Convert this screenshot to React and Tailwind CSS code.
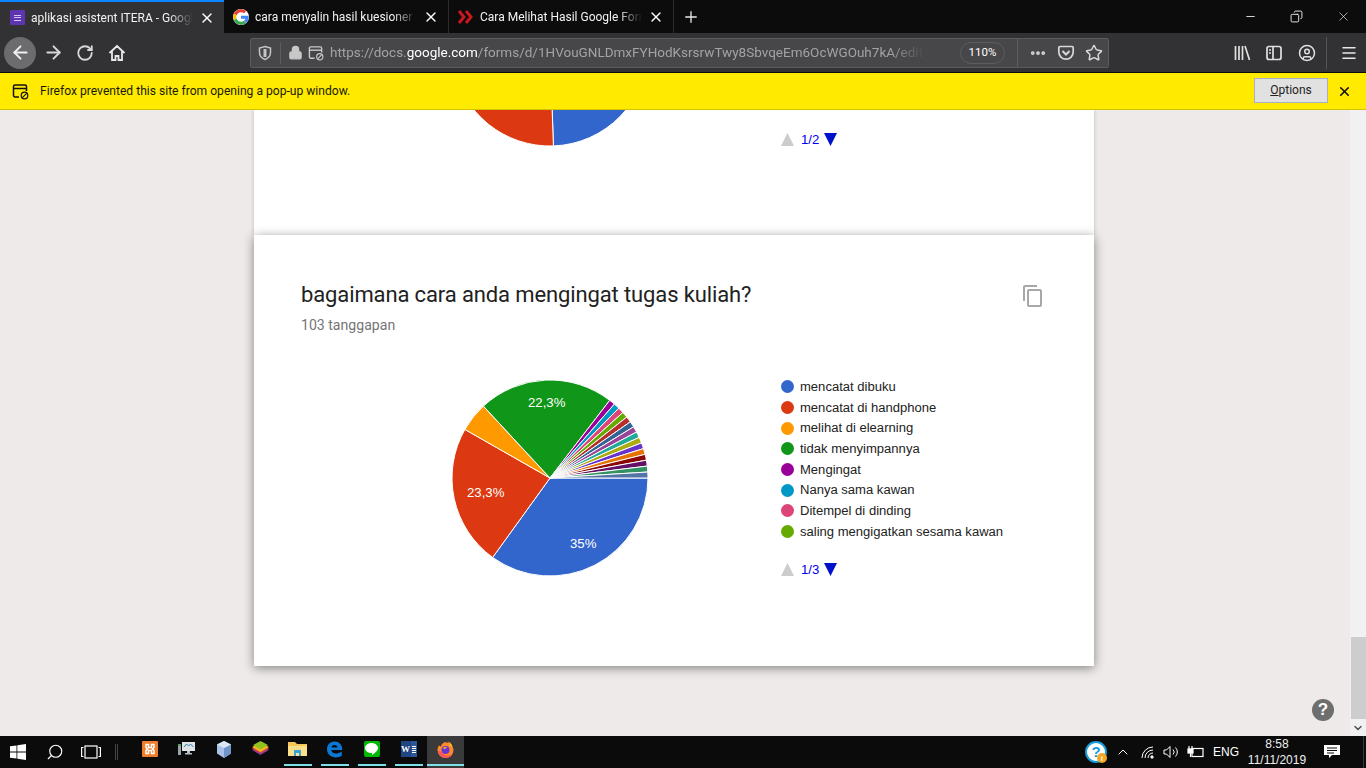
import { ArrowLeft, ArrowRight, RotateCw, Lock, Plus, X, Minus, Copy, ChevronDown, ChevronUp, Menu, Star, CircleUser, Search, MoreHorizontal } from 'lucide-react'

const COLORS = ['#3366cc', '#dc3912', '#ff9900', '#109618', '#990099', '#0099c6', '#dd4477', '#66aa00', '#b82e2e', '#316395', '#994499', '#22aa99', '#aaaa11', '#6633cc', '#e67300', '#8b0707', '#651067', '#329262', '#5574a6']
const COUNTS = [36, 24, 5, 23, 1, 1, 1, 1, 1, 1, 1, 1, 1, 1, 1, 1, 1, 1, 1]
const LEGEND = ['mencatat dibuku', 'mencatat di handphone', 'melihat di elearning', 'tidak menyimpannya', 'Mengingat', 'Nanya sama kawan', 'Ditempel di dinding', 'saling mengigatkan sesama kawan']

function slice(cx, cy, r, a, b) {
  const x1 = cx + r * Math.cos((a * Math.PI) / 180)
  const y1 = cy + r * Math.sin((a * Math.PI) / 180)
  const x2 = cx + r * Math.cos((b * Math.PI) / 180)
  const y2 = cy + r * Math.sin((b * Math.PI) / 180)
  return `M${cx} ${cy}L${x1} ${y1}A${r} ${r} 0 ${b - a > 180 ? 1 : 0} 1 ${x2} ${y2}Z`
}

function Pie() {
  let angle = 0
  const total = COUNTS.reduce((s, c) => s + c, 0)
  return (
    <svg width="200" height="200" viewBox="0 0 200 200" className="shrink-0">
      {COUNTS.map((c, i) => {
        const start = angle
        angle += (c / total) * 360
        return <path key={i} d={slice(100, 100, 98, start, angle)} fill={COLORS[i]} stroke="#fff" strokeWidth="1" />
      })}
      <g fill="#fff" fontSize="13.2" fontFamily="Liberation Sans, Arial, sans-serif">
        <text x="120" y="170">35%</text>
        <text x="17" y="119">23,3%</text>
        <text x="78" y="29">22,3%</text>
      </g>
    </svg>
  )
}

function TopPie() {
  return (
    <svg width="200" height="36" viewBox="0 62 200 36" className="shrink-0">
      <path d={slice(100, 0, 98, 0, 88)} fill="#3366cc" stroke="#fff" />
      <path d={slice(100, 0, 98, 88, 170)} fill="#dc3912" stroke="#fff" />
    </svg>
  )
}

function Pager({ label }) {
  return (
    <div className="flex items-center h-[14px]">
      <svg width="13" height="13" viewBox="0 0 13 13"><path d="M6.500 0L13 13H0Z" fill="#cccccc" /></svg>
      <span className="ml-[7px] w-[23px] pt-[2px] text-[13.2px] text-[#0000ee]">{label}</span>
      <svg width="13" height="13" viewBox="0 0 13 13"><path d="M0 0H13L6.500 13Z" fill="#0011cc" /></svg>
    </div>
  )
}

function Tab({ active, icon, title, width }) {
  return (
    <div className={`relative ${width} h-[33px] flex items-center pl-[9px] pr-[9px] ${active ? 'bg-[#323234] border-t-2 border-t-[#0a84ff]' : 'border-r border-[#2c2c2c]'}`}>
      <span className="w-[16px] h-[16px] shrink-0 flex items-center justify-center">{icon}</span>
      <span className="ml-[6px] flex-1 overflow-hidden whitespace-nowrap text-[12px] text-[#f2f2f2] [mask-image:linear-gradient(to_right,black_85%,transparent)]">{title}</span>
      <X size={16} strokeWidth={2} className="ml-[6px] shrink-0 text-white" />
    </div>
  )
}

function GoogleG() {
  return (
    <svg width="16" height="16" viewBox="0 0 48 48" className="bg-white rounded-full">
      <path fill="#EA4335" d="M24 9.500c3.500 0 6.700 1.300 9.100 3.500l6.800-6.800C35.800 2.400 30.300 0 24 0 14.600 0 6.500 5.400 2.600 13.200l7.900 6.200C12.400 13.600 17.700 9.500 24 9.500z" />
      <path fill="#4285F4" d="M47 24.500c0-1.600-.2-3.100-.4-4.500H24v9h13c-.6 3-2.300 5.500-4.800 7.200l7.700 6C44.400 37.900 47 31.800 47 24.500z" />
      <path fill="#FBBC05" d="M10.500 28.600c-.5-1.400-.8-3-.8-4.600s.3-3.200.8-4.600l-7.900-6.200C1 16.500 0 20.100 0 24s1 7.500 2.600 10.800l7.900-6.200z" />
      <path fill="#34A853" d="M24 48c6.500 0 11.900-2.100 15.900-5.800l-7.700-6c-2.200 1.500-4.900 2.300-8.200 2.300-6.300 0-11.600-4.200-13.500-9.900l-7.900 6.200C6.500 42.600 14.600 48 24 48z" />
    </svg>
  )
}

function BlockedPopup({ color, size = 17 }) {
  return (
    <svg width={size} height={size} viewBox="0 0 17 17" fill="none" stroke={color} strokeWidth="1.500">
      <path d="M7 14H3a1.500 1.500 0 0 1-1.500-1.500v-9A1.500 1.500 0 0 1 3 2h10a1.500 1.500 0 0 1 1.500 1.500V8" />
      <path d="M1.500 5.500h13" />
      <circle cx="12.500" cy="12.500" r="3.300" strokeWidth="1.200" />
      <path d="M10.300 14.700l4.400-4.400" strokeWidth="1.200" />
    </svg>
  )
}

function Toolbar() {
  return (
    <div className="h-[40px] bg-[#323234] flex items-center border-b border-[#0c0c0c]">
      <div className="w-[32px] h-[32px] ml-[4px] rounded-full bg-[#6c6c6e] flex items-center justify-center">
        <ArrowLeft size={21} strokeWidth={2.200} className="text-[#f0f0f0]" />
      </div>
      <ArrowRight size={21} strokeWidth={2.200} className="ml-[7px] text-[#d8d8d8]" />
      <RotateCw size={18} strokeWidth={2.400} className="ml-[12px] text-[#d8d8d8]" />
      <svg width="18" height="18" viewBox="0 0 18 18" fill="none" stroke="#e8e8e8" strokeWidth="1.800" className="ml-[14px]">
        <path d="M1.500 9L9 2l7.500 7M4 7.500V16h3.500v-4h3v4H14V7.500" />
      </svg>
      <div className="ml-[124px] w-[859px] h-[30px] shrink-0 bg-[#474749] border border-[#5c5c5e] rounded-[2px] flex items-center">
        <svg width="16" height="16" viewBox="0 0 16 16" fill="none" stroke="#c4c4c4" strokeWidth="1.500" className="ml-[6px]">
          <path d="M8 1.500l5.500 1.500v4.500c0 3.500-2.500 5.800-5.500 7-3-1.200-5.500-3.500-5.500-7V3z" />
          <path d="M8 4v8" strokeWidth="3" />
        </svg>
        <div className="ml-[7px] w-px h-[22px] bg-[#5c5c5e]" />
        <Lock size={15} fill="#c8c8c8" className="ml-[7px] text-[#c8c8c8]" />
        <span className="ml-[5px]"><BlockedPopup color="#c8c8c8" size={16} /></span>
        <div className="ml-[6px] w-[595px] overflow-hidden whitespace-nowrap text-[13.500px] text-[#a3a3a5] [mask-image:linear-gradient(to_right,black_94%,transparent)]">
          https://docs.<span className="text-white">google.com</span>/forms/d/1HVouGNLDmxFYHodKsrsrwTwy8SbvqeEm6OcWGOuh7kA/edit
        </div>
        <div className="ml-[35px] w-[45px] h-[22px] rounded-full border border-[#5c5c5e] flex items-center justify-center text-[11.500px] text-white">110%</div>
        <div className="ml-[12px] w-px h-[28px] bg-[#5c5c5e]" />
        <MoreHorizontal size={18} strokeWidth={3} className="ml-[11px] text-[#d8d8d8]" />
        <svg width="18" height="18" viewBox="0 0 18 18" fill="none" stroke="#d8d8d8" strokeWidth="1.700" className="ml-[10px]">
          <path d="M3 2.500h12a1.200 1.200 0 0 1 1.200 1.200V8A7.200 7.200 0 0 1 1.800 8V3.700A1.200 1.200 0 0 1 3 2.500z" />
          <path d="M5.500 7L9 10.500 12.500 7" strokeWidth="2" />
        </svg>
        <Star size={18} strokeWidth={2} className="ml-[10px] text-[#d8d8d8]" />
      </div>
      <svg width="18" height="18" viewBox="0 0 18 18" stroke="#e0e0e0" strokeWidth="1.700" className="ml-[124px] shrink-0">
        <path d="M2.500 2v14M6 2v14M9.500 2v14M12 2l4.500 14" />
      </svg>
      <svg width="18" height="18" viewBox="0 0 18 18" fill="none" stroke="#e0e0e0" strokeWidth="1.700" className="ml-[14px] shrink-0">
        <rect x="2" y="2.500" width="14" height="13" rx="2" />
        <path d="M8 2.500v13M4 6h2M4 9h2" />
      </svg>
      <CircleUser size={18} className="ml-[15px] shrink-0 text-[#e0e0e0]" />
      <div className="ml-[10px] w-px h-[32px] shrink-0 bg-[#555557]" />
      <Menu size={18} strokeWidth={2} className="ml-[13px] shrink-0 text-[#e8e8e8]" />
    </div>
  )
}

function TaskIcon({ open, active, children }) {
  return (
    <div className={`w-[37px] h-[32px] shrink-0 flex flex-col items-center ${active ? 'bg-[#3a3a3a]' : ''}`}>
      <div className="flex-1 flex items-center justify-center pb-[2px]">{children}</div>
      <span className={`h-[2px] mb-[2px] ${active ? 'w-full' : 'w-[28px]'} ${open ? 'bg-[#7fdfe8]' : ''}`} />
    </div>
  )
}

function Taskbar() {
  return (
    <div className="h-[32px] shrink-0 bg-[#0b0b0b] flex items-center text-white relative">
      <svg width="16" height="16" viewBox="0 0 16 16" fill="#fff" className="ml-[10px] shrink-0">
        <path d="M0 2.300l6.500-.9v6.200H0zM7.300 1.300L16 0v7.600H7.300zM0 8.400h6.500v6.200L0 13.700zM7.300 8.400H16V16l-8.700-1.300z" />
      </svg>
      <Search size={18} strokeWidth={1.500} className="ml-[20px] shrink-0 -scale-x-100" />
      <svg width="20" height="14" viewBox="0 0 20 14" fill="none" stroke="#fff" strokeWidth="1.200" className="ml-[17px] shrink-0">
        <rect x="4" y="1" width="12" height="12" />
        <path d="M2.500 2.500H.6v9h1.900M17.500 2.500h1.900v9h-1.900" />
      </svg>
      <div className="ml-[14px] mr-[13px] w-[3px] h-[16px] shrink-0 border-x border-[#444444]" />
      <TaskIcon>
        <div className="w-[16px] h-[16px] bg-[#ef7d2c] rounded-[1px] flex items-center justify-center">
          <svg width="12" height="12" viewBox="0 0 12 12" fill="none" stroke="#fff" strokeWidth="1.500"><path d="M2 1.500h2.500v3h3v-3H10v3L8.500 6 10 7.500v3H7.500v-3h-3v3H2v-3L3.500 6 2 4.500z" /></svg>
        </div>
      </TaskIcon>
      <TaskIcon>
        <svg width="17" height="16" viewBox="0 0 17 16">
          <rect x="4" y="1" width="13" height="9" fill="#dfe4e8" />
          <path d="M6 6l2.500-3 2 2 2-2 3 3" fill="none" stroke="#3a7bb0" />
          <rect x="0" y="5" width="3" height="9" fill="#9ca3a8" />
          <rect x="0" y="3" width="3" height="2" fill="#5aa05a" />
          <path d="M9 10h3v2h2v1.500H7V12h2z" fill="#b8bec2" />
        </svg>
      </TaskIcon>
      <TaskIcon>
        <svg width="16" height="17" viewBox="0 0 16 17">
          <path d="M8 0l7 3.500v9L8 17 1 12.500v-9z" fill="#a9c3e8" />
          <path d="M8 7l7-3.500v9L8 17z" fill="#7195c8" />
          <path d="M8 0l7 3.500L8 7 1 3.500z" fill="#dbe7f6" />
        </svg>
      </TaskIcon>
      <TaskIcon>
        <svg width="17" height="16" viewBox="0 0 17 16">
          <path d="M8.500 5L17 9l-8.500 5L0 9z" fill="#7b3fa0" />
          <path d="M8.500 3.500L17 7.500l-8.500 5L0 7.500z" fill="#e23b3b" />
          <path d="M8.500 2L17 6l-8.500 5L0 6z" fill="#f5b81f" />
          <path d="M8.500 0L16 4l-7.500 4.500L1 4z" fill="#8fc31f" />
        </svg>
      </TaskIcon>
      <TaskIcon open>
        <svg width="19" height="16" viewBox="0 0 19 16">
          <path d="M0 1h7l2 2h10v12H0z" fill="#f6c95a" />
          <rect x="0" y="5" width="19" height="10" fill="#fde08a" />
          <path d="M6 15V9h7v6h-2v-3H8v3z" fill="#3aa0d8" />
        </svg>
      </TaskIcon>
      <TaskIcon open>
        <svg width="17" height="17" viewBox="0 0 17 17">
          <path d="M1 8C1 3.500 4.300.5 8.500.5c4.500 0 7.800 3 7.800 8.500H5.300c.2 2.300 2 3.500 4.300 3.500 2 0 4-.6 6.200-2v4.300c-2 1-4 1.600-6.500 1.600C4 16 1 12.700 1 8zm4.400-1.500h6.200C11.400 4.800 10 4 8.500 4S5.700 4.800 5.400 6.500z" fill="#0a78d4" />
        </svg>
      </TaskIcon>
      <TaskIcon open>
        <div className="w-[16px] h-[16px] bg-[#00b900] rounded-[2px] flex items-center justify-center">
          <svg width="13" height="12" viewBox="0 0 13 12"><path d="M6.500 0C10 0 13 2.200 13 5c0 3-4 5.500-6 7 .3-1.500 0-2-1-2C2.800 10 0 7.800 0 5s3-5 6.500-5z" fill="#fff" /></svg>
        </div>
      </TaskIcon>
      <TaskIcon open>
        <div className="w-[16px] h-[16px] bg-[#2b579a] flex">
          <span className="w-[10px] h-full bg-[#1f4583] flex items-center justify-center text-[9px] leading-none font-bold font-['Liberation_Serif',serif]">W</span>
          <span className="flex-1 flex flex-col justify-center gap-px pl-px">
            <span className="h-px w-[4px] bg-white" />
            <span className="h-px w-[4px] bg-white" />
            <span className="h-px w-[4px] bg-white" />
            <span className="h-px w-[4px] bg-white" />
          </span>
        </div>
      </TaskIcon>
      <TaskIcon open active>
        <svg width="17" height="17" viewBox="0 0 17 17">
          <path d="M8.500 1c1 1 2 1 3.500 0 .5 1 .8 1.500 2 2.500.8 1 2.500 3 2.500 5.500a8 8 0 1 1-16 0c0-2 .8-3.500 1.500-4.500C3 5 3.300 5.500 3.800 5.500 4.500 3 6.500 1.500 8.500 1z" fill="#ff8a2a" />
          <path d="M12.500 0c.3 2 2.500 3 3 6-1-1-2-1.500-3-1.500C13 3 12.800 1.500 12.500 0z" fill="#ffcb2e" />
          <path d="M1 9a8 8 0 0 0 15 3.500C13 16 6 15 4 11z" fill="#ff4f5e" />
          <circle cx="8.500" cy="9" r="4" fill="#6a36d0" />
          <path d="M6 7c1-1 3-1.500 4.500-.5-1 0-1.500.5-1.500 1l-2 .5z" fill="#ffb12e" />
        </svg>
      </TaskIcon>

      <div className="ml-[621px] relative w-[22px] h-[22px] shrink-0 rounded-full bg-white border-2 border-[#1a9ad9] flex items-center justify-center text-[#1a9ad9] text-[15px] font-bold font-['Liberation_Sans',sans-serif]">
        ?
        <span className="absolute -right-[2px] -bottom-[2px] w-[10px] h-[10px] rounded-full bg-[#f5a623] flex items-center justify-center text-[7px] leading-none text-white">i</span>
      </div>
      <ChevronUp size={16} strokeWidth={1.500} className="ml-[8px] shrink-0" />
      <svg width="14" height="13" viewBox="0 0 14 13" fill="none" stroke="#fff" strokeWidth="1" className="ml-[10px] shrink-0">
        <path d="M1 12A11 11 0 0 1 12 1M4 12a8 8 0 0 1 8-8M7 12a5 5 0 0 1 5-5" />
        <circle cx="11" cy="11" r="1.200" fill="#fff" />
      </svg>
      <svg width="16" height="14" viewBox="0 0 16 14" fill="none" stroke="#fff" strokeWidth="1" className="ml-[8px] shrink-0">
        <path d="M1 5h2.500L7 1.500v11L3.500 9H1zM10 4.500a3.500 3.500 0 0 1 0 5M12.500 2.500a6.500 6.500 0 0 1 0 9" />
      </svg>
      <svg width="17" height="12" viewBox="0 0 17 12" fill="none" stroke="#fff" strokeWidth="1.200" className="ml-[8px] shrink-0">
        <rect x="5" y="2.500" width="11" height="8" />
        <rect x="1" y="3" width="5" height="4" fill="#fff" />
        <path d="M2 0v3M5 0v3M3.500 7v4" />
      </svg>
      <span className="ml-[9px] w-[24px] shrink-0 text-[12px]">ENG</span>
      <div className="ml-[9px] w-[62px] shrink-0 flex flex-col items-center text-[12px] leading-[16px] text-[#f0f0f0]">
        <span>8:58</span>
        <span>11/11/2019</span>
      </div>
      <svg width="17" height="15" viewBox="0 0 17 15" className="ml-[16px] shrink-0">
        <path d="M0 0h16v10H8l-3 3v-3H0z" fill="#fff" />
        <path d="M3 3h10M3 5.500h10M3 8h7" stroke="#0b0b0b" />
      </svg>
      <div className="ml-[22px] w-px h-[32px] shrink-0 bg-[#3a3a3a]" />
    </div>
  )
}

export default function App() {
  return (
    <div className="w-[1366px] h-[768px] flex flex-col overflow-hidden font-['Liberation_Sans',Arial,sans-serif] bg-[#eeeaea]">
      <div className="shrink-0 font-['Roboto',sans-serif]">
        <div className="h-[33px] bg-[#0c0c0c] flex items-center">
          <Tab
            active
            width="w-[224px]"
            title="aplikasi asistent ITERA - Google Forms"
            icon={
              <span className="w-[15px] h-[15px] rounded-[1px] bg-[#5e35b1] flex flex-col items-center justify-center gap-[1.500px]">
                <span className="w-[7px] h-px bg-[#d1c4e9]" />
                <span className="w-[7px] h-px bg-[#d1c4e9]" />
                <span className="w-[7px] h-px bg-[#d1c4e9]" />
              </span>
            }
          />
          <Tab width="w-[225px]" title="cara menyalin hasil kuesioner google" icon={<GoogleG />} />
          <Tab
            width="w-[225px]"
            title="Cara Melihat Hasil Google Form"
            icon={
              <svg width="16" height="14" viewBox="0 0 16 14" fill="none" stroke="#c8171d" strokeWidth="3">
                <path d="M1 1l5 6-5 6M8 1l5 6-5 6" />
              </svg>
            }
          />
          <Plus size={18} strokeWidth={1.800} className="ml-[8px] text-[#e8e8e8]" />
          <Minus size={13} strokeWidth={1.500} className="ml-[544px] text-white" />
          <Copy size={13} strokeWidth={1.600} className="ml-[33px] -scale-x-100 text-white" />
          <X size={15} strokeWidth={1} className="ml-[33px] text-white" />
        </div>
        <Toolbar />
        <div className="h-[37px] bg-[#ffea00] border-b border-[#d4c400] flex items-center pl-[12px] text-[12.100px] text-[#1a1a00]">
          <BlockedPopup color="#111111" />
          <span className="ml-[11px] flex-1 pt-[1px]">Firefox prevented this site from opening a pop-up window.</span>
          <button className="w-[74px] h-[25px] mb-[2px] bg-[#e1e1e1] border border-[#a9b0bf] text-[12px] text-[#222222]">
            <span className="underline">O</span>ptions
          </button>
          <X size={15} strokeWidth={2.500} className="ml-[9px] mr-[14px] text-[#111111]" />
        </div>
      </div>

      <div className="flex-1 min-h-0 flex relative">
        <div className="flex-1 min-w-0 overflow-hidden pl-[254px]">
          <div className="w-[840px] h-[125px] bg-white shadow-[0_0_4px_rgba(0,0,0,0.2)] flex pl-[196px]">
            <TopPie />
            <div className="ml-[131px] mt-[22px]"><Pager label="1/2" /></div>
          </div>
          <div className="relative w-[840px] h-[431px] bg-white shadow-[0_2px_10px_rgba(0,0,0,0.45)] pl-[47px] pt-[45px]">
            <div className="flex items-start justify-between pr-[49px]">
              <h1 className="font-['Roboto',sans-serif] text-[22px] tracking-[-0.12px] leading-[30px] text-[#212121]">bagaimana cara anda mengingat tugas kuliah?</h1>
              <svg width="24" height="24" viewBox="0 0 24 24" fill="#a8a8a8" className="mt-[4px]">
                <path d="M16 1H4c-1.100 0-2 .9-2 2v14h2V3h12V1zm3 4H8c-1.100 0-2 .9-2 2v14c0 1.100.9 2 2 2h11c1.100 0 2-.9 2-2V7c0-1.100-.9-2-2-2zm0 16H8V7h11v14z" />
              </svg>
            </div>
            <p className="mt-[6px] font-['Roboto',sans-serif] text-[14.100px] leading-[18px] text-[#757575]">103 tanggapan</p>
            <div className="mt-[44px] ml-[149px] flex items-start">
              <Pie />
              <div className="ml-[131px] mt-[-1.500px]">
                {LEGEND.map((l, i) => (
                  <div key={l} className="h-[20.670px] flex items-center">
                    <span className="w-[13px] h-[13px] rounded-full" style={{ backgroundColor: COLORS[i] }} />
                    <span className="ml-[6px] text-[13.050px] text-[#222222] whitespace-nowrap">{l}</span>
                  </div>
                ))}
                <div className="mt-[20.500px]"><Pager label="1/3" /></div>
              </div>
            </div>
          </div>
        </div>
        <div className="w-[16px] shrink-0 bg-[#f1f1f1] flex flex-col justify-end items-center">
          <div className="w-[15px] h-[82px] bg-[#cdcdcd] mb-[3px]" />
          <ChevronDown size={12} strokeWidth={3} className="text-[#505050] mb-[2px]" />
        </div>
        <div className="absolute right-[32px] bottom-[15px] w-[22px] h-[22px] rounded-full bg-[#6e6e6e] text-white text-[17px] font-bold flex items-center justify-center">?</div>
      </div>

      <Taskbar />
    </div>
  )
}
